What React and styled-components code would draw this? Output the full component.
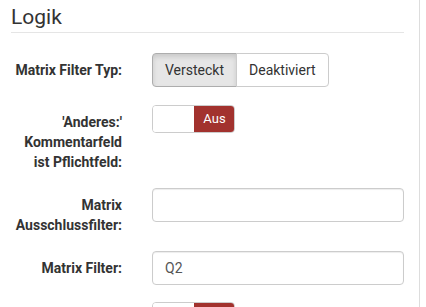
import React from 'react';
import styled, { createGlobalStyle } from 'styled-components';

const GlobalStyle = createGlobalStyle`
  html, body {
    margin: 0;
    padding: 0;
    background: #ffffff;
  }
  body {
    font-family: Roboto, "Liberation Sans", Arial, sans-serif;
    font-size: 14px;
    line-height: 1.42857;
    color: #333333;
  }
`

const Panel = styled.div`
  width: 393px;
  min-height: 307px;
  padding: 6px 15px 0 11px;
  border-right: 1px solid #dddddd;
  overflow: hidden;
  height: 307px;
  box-sizing: content-box;
`

const Heading = styled.h3`
  margin: 0;
  padding-bottom: 3px;
  font-size: 21px;
  font-weight: 400;
  line-height: 23px;
  color: #333333;
  border-bottom: 1px solid #e5e5e5;
`

const Form = styled.div`
  display: flex;
  flex-direction: column;
  gap: 16px;
  margin-top: 20px;
`

const Row = styled.div`
  display: grid;
  grid-template-columns: 111px 1fr;
  column-gap: 30px;
  align-items: start;
  padding-top: ${p => p.$top || 0}px;
`

const Label = styled.label`
  padding-top: 7px;
  text-align: right;
  font-weight: 700;
  font-size: 14px;
  line-height: 20px;
  color: #333333;
`

const BtnGroup = styled.div`
  display: inline-flex;
  justify-self: start;
`

const Btn = styled.button`
  height: 34px;
  padding: 6px 12px;
  font-family: inherit;
  font-size: 14px;
  line-height: 20px;
  color: #333333;
  background: ${p => (p.$active ? '#e6e6e6' : '#ffffff')};
  border: 1px solid ${p => (p.$active ? '#adadad' : '#cccccc')};
  box-shadow: ${p => (p.$active ? 'inset 0 3px 5px rgba(0,0,0,0.125)' : 'none')};
  border-radius: 0;
  &:first-child {
    border-radius: 4px 0 0 4px;
  }
  &:last-child {
    border-radius: 0 4px 4px 0;
    margin-left: -1px;
  }
`

const Toggle = styled.div`
  display: flex;
  width: 83px;
  height: 28px;
  box-sizing: border-box;
  border: 1px solid #cccccc;
  border-radius: 4px;
  overflow: hidden;
  justify-self: start;
`

const ToggleOff = styled.span`
  flex: 1;
  background: #ffffff;
`

const ToggleOn = styled.span`
  width: 41px;
  margin: -1px -1px -1px 0;
  display: flex;
  align-items: center;
  justify-content: center;
  background: #a2322e;
  color: #ffffff;
  font-size: 13px;
  border-radius: 0 4px 4px 0;
`

const Input = styled.input`
  display: block;
  width: 100%;
  height: 34px;
  box-sizing: border-box;
  padding: 6px 12px;
  font-family: inherit;
  font-size: 14px;
  color: #555555;
  background: #ffffff;
  border: 1px solid #cccccc;
  border-radius: 4px;
  box-shadow: inset 0 1px 1px rgba(0,0,0,0.075);
  outline: none;
`

const App = () => {
  return (
    <>
      <GlobalStyle />
      <Panel>
        <Heading>Logik</Heading>
        <Form>
          <Row>
            <Label>Matrix Filter Typ:</Label>
            <BtnGroup>
              <Btn $active>Versteckt</Btn>
              <Btn>Deaktiviert</Btn>
            </BtnGroup>
          </Row>
          <Row $top={2}>
            <Label>'Anderes:' Kommentarfeld ist Pflichtfeld:</Label>
            <Toggle>
              <ToggleOff />
              <ToggleOn>Aus</ToggleOn>
            </Toggle>
          </Row>
          <Row>
            <Label>Matrix Ausschlussfilter:</Label>
            <Input defaultValue="" />
          </Row>
          <Row>
            <Label>Matrix Filter:</Label>
            <Input defaultValue="Q2" />
          </Row>
          <Row $top={1}>
            <Label></Label>
            <Toggle>
              <ToggleOff />
              <ToggleOn>Aus</ToggleOn>
            </Toggle>
          </Row>
        </Form>
      </Panel>
    </>
  );
};

export default App;
